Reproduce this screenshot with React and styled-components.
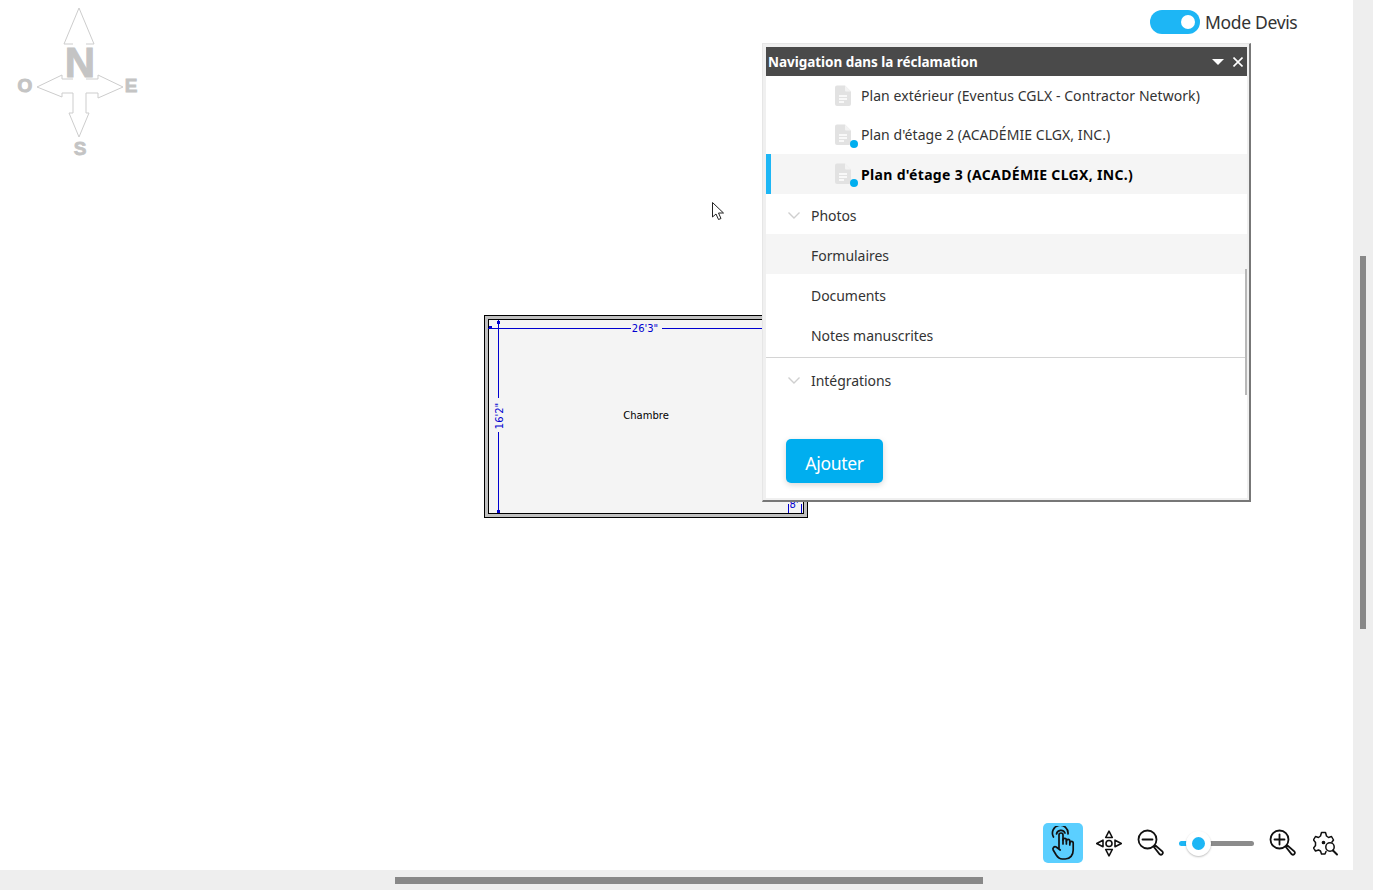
import React from 'react';
import styled, { createGlobalStyle } from 'styled-components';

const GlobalStyle = createGlobalStyle`
    html, body {
        margin: 0;
        padding: 0;
        height: 100%;
        overflow: hidden;
        background: #fff;
        font-family: "Noto Sans", "Open Sans", sans-serif;
    }
`;

const Page = styled.div`
    display: grid;
    grid-template-columns: 1fr 20px;
    grid-template-rows: 1fr 20px;
    width: 1373px;
    height: 890px;
`;

const Canvas = styled.div`
    position: relative;
    overflow: hidden;
    background: #fff;
`;

const VerticalTrack = styled.div`
    background: #eee;
    padding: 256px 7px 0;
`;

const VerticalThumb = styled.div`
    width: 6px;
    height: 373px;
    background: #888;
`;

const HorizontalTrack = styled.div`
    grid-column: 1 / 3;
    background: #eee;
    padding: 7px 0 0 395px;
`;

const HorizontalThumb = styled.div`
    width: 588px;
    height: 7px;
    background: #888;
`;

const CompassWrap = styled.svg`
    position: absolute;
    left: 16px;
    top: 6px;
`;

const PlanWrap = styled.svg`
    position: absolute;
    left: 484px;
    top: 315px;
`;

const CursorWrap = styled.svg`
    position: absolute;
    left: 711px;
    top: 201px;
`;

const ModeToggle = styled.div`
    position: absolute;
    top: 10px;
    left: 1150px;
    display: flex;
    align-items: center;
    gap: 5px;
    color: #333;
    font-size: 17.5px;
    line-height: 24px;
    letter-spacing: -0.33px;
`;

const Track = styled.div`
    display: flex;
    align-items: center;
    justify-content: flex-end;
    width: 50px;
    height: 24px;
    padding-right: 5px;
    box-sizing: border-box;
    border-radius: 12px;
    background: #1db6f5;
`;

const Knob = styled.div`
    width: 14px;
    height: 14px;
    border-radius: 50%;
    background: #fff;
`;

const Panel = styled.div`
    position: absolute;
    left: 762px;
    top: 43px;
    width: 489px;
    height: 459px;
    box-sizing: border-box;
    display: flex;
    flex-direction: column;
    padding: 3px 2px 2px 3px;
    background: #f0f0f0;
    border-style: solid;
    border-width: 1px 2px 2px 1px;
    border-color: #e6e6e6 #777 #777 #e6e6e6;
`;

const PanelHeader = styled.div`
    display: flex;
    align-items: center;
    height: 29px;
    flex: none;
    padding: 0 4px 0 2px;
    background: #4a4a4a;
    color: #fff;
    font-size: 13.5px;
    font-weight: 700;
    letter-spacing: -0.03px;
`;

const HeaderTitle = styled.span`
    flex: 1;
`;

const HeaderIcon = styled.svg`
    display: block;
    margin-left: 9px;
`;

const PanelBody = styled.div`
    position: relative;
    flex: 1;
    display: flex;
    flex-direction: column;
    background: #fff;
`;

const TreeRow = styled.div`
    display: flex;
    align-items: center;
    box-sizing: border-box;
    height: ${props => props.height || 40}px;
    padding-left: ${props => props.indent}px;
    padding-top: ${props => props.drop || 0}px;
    color: ${props => props.selected ? '#000' : '#333'};
    font-size: 14px;
    font-weight: ${props => props.selected ? 700 : 400};
    letter-spacing: ${props => props.spacing}px;
    background: ${props => props.shaded ? '#f5f5f5' : 'transparent'};
    box-shadow: ${props => props.selected ? 'inset 5px 0 0 #1db6f5' : 'none'};
`;

const Divider = styled.div`
    height: 1px;
    margin: 3px 0 1px;
    background: #d4d4d4;
`;

const FileBadge = styled.span`
    position: relative;
    display: flex;
    width: 18px;
    height: 22px;
    margin-right: 9px;
    flex: none;
`;

const BlueDot = styled.span`
    position: absolute;
    right: -6px;
    bottom: -2px;
    width: 8px;
    height: 8px;
    border-radius: 50%;
    background: #00aeef;
`;

const Chevron = styled.svg`
    display: block;
    flex: none;
    margin-right: 11px;
`;

const PanelScroll = styled.div`
    position: absolute;
    right: 0;
    top: 193px;
    width: 2px;
    height: 126px;
    background: #b8b8b8;
`;

const AddButton = styled.button`
    align-self: flex-start;
    width: 97px;
    height: 44px;
    margin: 40px 0 0 20px;
    padding: 3px 0 0;
    border: 0;
    border-radius: 5px;
    background: #00aeef;
    color: #fff;
    font-family: inherit;
    font-size: 17.5px;
    letter-spacing: -0.3px;
    box-shadow: 0 2px 6px rgba(0, 0, 0, 0.16);
`;

const Toolbar = styled.div`
    position: absolute;
    left: 1043px;
    top: 823px;
    display: flex;
    align-items: center;
    height: 40px;
`;

const ToolButton = styled.div`
    display: flex;
    align-items: center;
    justify-content: center;
    width: ${props => props.width || 40}px;
    height: 40px;
    margin-left: ${props => props.gap || 0}px;
    border-radius: 5px;
    background: ${props => props.active ? '#5bcfff' : 'transparent'};
`;

const Slider = styled.div`
    position: relative;
    width: 75px;
    height: 5px;
    margin-left: 14px;
    border-radius: 3px;
    background: linear-gradient(to right, #1db6f5 0 19px, #8c8c8c 19px);
`;

const Thumb = styled.div`
    position: absolute;
    left: 6.5px;
    top: -10px;
    width: 25px;
    height: 25px;
    box-sizing: border-box;
    border: 6px solid #fff;
    border-radius: 50%;
    background: #1db6f5;
    box-shadow: 0 1px 2px rgba(0, 0, 0, 0.25);
`;

const FileIcon = () => (
    <svg width="18" height="22" viewBox="0 0 18 22">
        <path d="M3 0.500h8l6 6v12.500a2 2 0 0 1-2 2H3a2 2 0 0 1-2-2V2.500a2 2 0 0 1 2-2z" fill="#e2e2e2" />
        <path d="M11 0.500l6 6h-5a1 1 0 0 1-1-1z" fill="#f3f3f3" />
        <path d="M5 11h8M5 14h8M5 17h5" stroke="#fff" strokeWidth="1.4" />
    </svg>
);

const ChevronIcon = () => (
    <Chevron width="12" height="7" viewBox="0 0 12 7">
        <path d="M0.500 0.500L6 6l5.500-5.500" fill="none" stroke="#cfcfcf" strokeWidth="1.4" />
    </Chevron>
);

const CompassLetter = styled.text`
    font-family: "Liberation Sans", sans-serif;
    font-weight: 700;
    font-size: ${props => props.size}px;
    fill: #c4c4c4;
    stroke: #c4c4c4;
    stroke-width: ${props => props.weight}px;
    text-anchor: middle;
`;

const Compass = () => (
    <CompassWrap width="124" height="156" viewBox="0 0 124 156">
        <path
            d="M57 38H48L63 2 78 38H70M57 73H46V69L21 81 46 91V87H57V107H53L63 131 73 107H70V87H82V92L107 81 82 69V73H70"
            fill="none" stroke="#cdcdcd" strokeWidth="1"
        />
        <CompassLetter x="64" y="71" size={42} weight={1}>N</CompassLetter>
        <CompassLetter x="9" y="86" size={19} weight={1}>O</CompassLetter>
        <CompassLetter x="115" y="86" size={19} weight={0.8}>E</CompassLetter>
        <CompassLetter x="64" y="149" size={19} weight={0.8}>S</CompassLetter>
    </CompassWrap>
);

const FloorPlan = () => (
    <PlanWrap width="324" height="203" viewBox="0 0 324 203" shapeRendering="crispEdges">
        <rect x="0.500" y="0.500" width="323" height="202" fill="#c0c0c0" stroke="#000" />
        <rect x="4.500" y="4.500" width="315" height="194" fill="#f4f4f4" stroke="#000" />
        <path d="M4 13H147M178 13H319M14 5V83M14 117V198" stroke="#0000d0" fill="none" />
        <path d="M304 189V198M317 189V198" stroke="#0000d0" fill="none" />
        <rect x="5" y="11" width="3" height="3" fill="#0000d0" />
        <rect x="13" y="6" width="3" height="3" fill="#0000d0" />
        <rect x="13" y="195" width="3" height="3" fill="#0000d0" />
        <text x="161" y="17" textAnchor="middle" fontFamily="DejaVu Sans" fontSize="10" fill="#0000d0">26'3"</text>
        <text x="162" y="104" textAnchor="middle" fontFamily="DejaVu Sans" fontSize="10" fill="#000">Chambre</text>
        <text transform="translate(19 101) rotate(-90)" textAnchor="middle" fontFamily="DejaVu Sans" fontSize="10" fill="#0000d0">16'2"</text>
        <text x="310" y="193" textAnchor="middle" fontFamily="DejaVu Sans" fontSize="10" fill="#0000d0">8'</text>
    </PlanWrap>
);

const HandIcon = () => (
    <svg width="24" height="34" viewBox="0 0 24 34" fill="none" stroke="#111" strokeWidth="1.700" strokeLinecap="round" strokeLinejoin="round">
        <path d="M2.500 11A7.800 7.800 0 1 1 17 8" />
        <path d="M5.500 8a4.500 4.500 0 0 1 8.500-1" />
        <path d="M8 22V9a2 2 0 0 1 4 0v9" />
        <path d="M12 14a1.700 1.700 0 0 1 3.400 0v4" />
        <path d="M15.400 15a1.700 1.700 0 0 1 3.400 0v4" />
        <path d="M18.800 17a1.700 1.700 0 0 1 3.400 0v7c0 5-3 9-8 9h-3c-3 0-4-1-6-4l-3-5c-1-2 1-4 3-3l4 3" />
    </svg>
);

const MoveIcon = () => (
    <svg width="26" height="27" viewBox="0 0 26 27" fill="none" stroke="#111" strokeWidth="1.600" strokeLinejoin="round">
        <path d="M13 1.200L16.300 7.500H9.700zM13 25.800L16.300 19.500H9.700zM.7 13.500L7 10.200V16.800zM25.300 13.500L19 10.200V16.800z" />
        <circle cx="13" cy="13.500" r="3" />
    </svg>
);

const ZoomIcon = ({plus}) => (
    <svg width="28" height="28" viewBox="0 0 28 28" fill="none" stroke="#111" strokeWidth="1.800" strokeLinecap="round">
        <circle cx="10.500" cy="10.500" r="9" />
        <path d="M5.500 10.500h10" />
        {plus && <path d="M10.500 5.500v10" />}
        <path d="M17 18l1.500-1.500 7 6a2 2 0 0 1-2.800 2.800z" />
    </svg>
);

const GearSearchIcon = () => (
    <svg width="26" height="26" viewBox="0 0 26 26" fill="none" stroke="#111" strokeWidth="1.500" strokeLinejoin="round" strokeLinecap="round">
        <path d="M13 21.500l-1 2.500H8.500l-1-3-2-1-3 1-2-3 2-2.500v-3L.500 10l2-3.500 3 1 2-1.500 1-3.500H12.500l1 3.500 2 1.500 3-1 2 3.500-1.500 2" />
        <circle cx="10.500" cy="12.500" r="1.100" fill="#111" />
        <circle cx="17" cy="17" r="4.200" fill="#fff" />
        <path d="M20 20.500l4 4" strokeWidth="2" />
    </svg>
);

const planRows = [
    {label: 'Plan extérieur (Eventus CGLX - Contractor Network)', height: 39},
    {label: "Plan d'étage 2 (ACADÉMIE CLGX, INC.)", height: 39, dot: true},
    {label: "Plan d'étage 3 (ACADÉMIE CLGX, INC.)", dot: true, selected: true},
];

const App = () => (
    <Page>
        <GlobalStyle />
        <Canvas>
            <Compass />
            <FloorPlan />
            <CursorWrap width="14" height="20" viewBox="0 0 14 20">
                <path d="M1.500 1.500V16l3.500-3 2.500 5.500 2.500-1-2.500-5.500H12.500z" fill="#fff" stroke="#222" strokeWidth="1" />
            </CursorWrap>
            <ModeToggle>
                <Track><Knob /></Track>
                <span>Mode Devis</span>
            </ModeToggle>
            <Panel>
                <PanelHeader>
                    <HeaderTitle>Navigation dans la réclamation</HeaderTitle>
                    <HeaderIcon width="12" height="6" viewBox="0 0 12 6">
                        <path d="M0 0h12L6 6z" fill="#fff" />
                    </HeaderIcon>
                    <HeaderIcon width="10" height="10" viewBox="0 0 10 10">
                        <path d="M0.500 0.500l9 9M9.500 0.500l-9 9" stroke="#fff" strokeWidth="1.600" />
                    </HeaderIcon>
                </PanelHeader>
                <PanelBody>
                    {planRows.map(row => (
                        <TreeRow
                            key={row.label}
                            indent={68}
                            height={row.height}
                            spacing={row.selected ? 0.33 : 0.06}
                            selected={row.selected}
                            shaded={row.selected}
                        >
                            <FileBadge>
                                <FileIcon />
                                {row.dot && <BlueDot />}
                            </FileBadge>
                            {row.label}
                        </TreeRow>
                    ))}
                    <TreeRow indent={22} drop={2} spacing={-0.05}><ChevronIcon />Photos</TreeRow>
                    <TreeRow indent={45} drop={2} spacing={-0.05} shaded>Formulaires</TreeRow>
                    <TreeRow indent={45} drop={2} spacing={-0.05}>Documents</TreeRow>
                    <TreeRow indent={45} drop={2} spacing={-0.05}>Notes manuscrites</TreeRow>
                    <Divider />
                    <TreeRow indent={22} drop={2} spacing={-0.05}><ChevronIcon />Intégrations</TreeRow>
                    <AddButton>Ajouter</AddButton>
                    <PanelScroll />
                </PanelBody>
            </Panel>
            <Toolbar>
                <ToolButton active><HandIcon /></ToolButton>
                <ToolButton width={26} gap={13}><MoveIcon /></ToolButton>
                <ToolButton width={28} gap={15}><ZoomIcon /></ToolButton>
                <Slider><Thumb /></Slider>
                <ToolButton width={28} gap={15}><ZoomIcon plus /></ToolButton>
                <ToolButton width={26} gap={16}><GearSearchIcon /></ToolButton>
            </Toolbar>
        </Canvas>
        <VerticalTrack><VerticalThumb /></VerticalTrack>
        <HorizontalTrack><HorizontalThumb /></HorizontalTrack>
    </Page>
);

export default App;
